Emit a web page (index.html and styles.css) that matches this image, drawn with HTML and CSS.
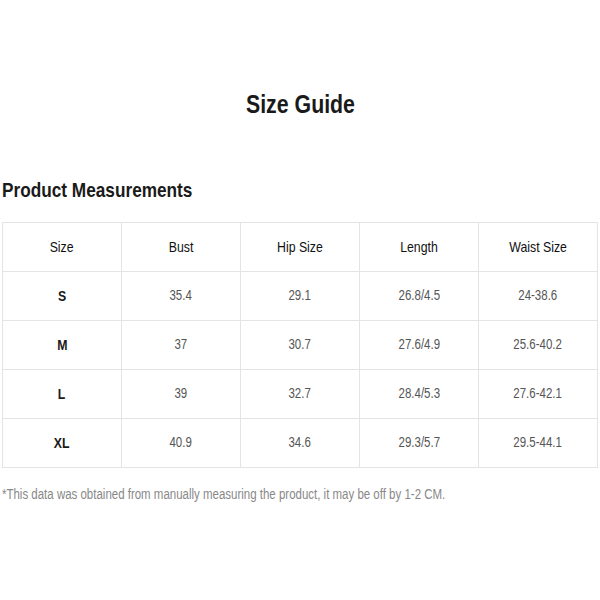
FILE: index.html
```html
<!DOCTYPE html>
<html>
<head>
<meta charset="utf-8">
<link rel="stylesheet" href="styles.css">
</head>
<body>
<div class="page">
  <h1 class="title"><span class="narrow">Size Guide</span></h1>
  <h2 class="subtitle"><span class="narrow left">Product Measurements</span></h2>
  <table class="sizes">
    <thead>
      <tr><th><span class="narrow">Size</span></th><th><span class="narrow">Bust</span></th><th><span class="narrow">Hip Size</span></th><th><span class="narrow">Length</span></th><th><span class="narrow">Waist Size</span></th></tr>
    </thead>
    <tbody>
      <tr><th><span class="narrow">S</span></th><td><span class="narrow">35.4</span></td><td><span class="narrow">29.1</span></td><td><span class="narrow">26.8/4.5</span></td><td><span class="narrow">24-38.6</span></td></tr>
      <tr><th><span class="narrow">M</span></th><td><span class="narrow">37</span></td><td><span class="narrow">30.7</span></td><td><span class="narrow">27.6/4.9</span></td><td><span class="narrow">25.6-40.2</span></td></tr>
      <tr><th><span class="narrow">L</span></th><td><span class="narrow">39</span></td><td><span class="narrow">32.7</span></td><td><span class="narrow">28.4/5.3</span></td><td><span class="narrow">27.6-42.1</span></td></tr>
      <tr><th><span class="narrow">XL</span></th><td><span class="narrow">40.9</span></td><td><span class="narrow">34.6</span></td><td><span class="narrow">29.3/5.7</span></td><td><span class="narrow">29.5-44.1</span></td></tr>
    </tbody>
  </table>
  <p class="note"><span class="narrow left">*This data was obtained from manually measuring the product, it may be off by 1-2 CM.</span></p>
</div>
</body>
</html>
```
FILE: styles.css
```css
html, body {
  margin: 0;
  padding: 0;
  background: #fff;
}
body {
  font-family: "Liberation Sans", Arial, sans-serif;
}
.page {
  padding: 0 2px;
}
.narrow {
  display: inline-block;
  white-space: nowrap;
  transform: scaleX(0.82);
  transform-origin: center;
}
.narrow.left {
  transform-origin: left center;
}
.title {
  margin: 0;
  padding-top: 91px;
  height: 26px;
  line-height: 26px;
  text-align: center;
  font-size: 26px;
  font-weight: bold;
  color: #1a1a1a;
}
.subtitle {
  margin: 0;
  padding-top: 61px;
  line-height: 24px;
  font-size: 21px;
  font-weight: bold;
  color: #1a1a1a;
}
.sizes {
  margin-top: 20px;
  width: 596px;
  border-collapse: collapse;
  table-layout: fixed;
}
.sizes th, .sizes td {
  border: 1px solid #e4e4e4;
  height: 46px;
  padding: 0 0 2px;
  text-align: center;
}
.sizes thead th {
  font-size: 15px;
  font-weight: normal;
  color: #111;
}
.sizes tbody th {
  font-size: 15px;
  font-weight: bold;
  color: #1a1a1a;
}
.sizes td {
  font-size: 14px;
  color: #555;
}
.note {
  margin: 18px 0 0;
  font-size: 14px;
  color: #888;
}
```
